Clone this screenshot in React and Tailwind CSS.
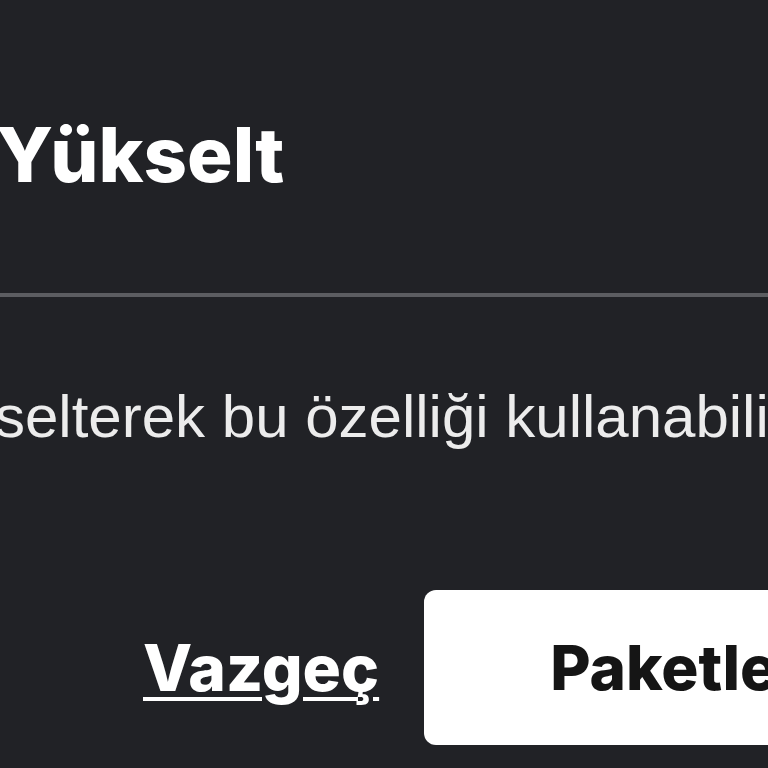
import React from 'react';

const App = () => {
  return (
    <div className="w-[768px] h-[768px] bg-[#212226] overflow-hidden flex flex-col">
      <h2
        className="pt-[116px] -ml-[4px] text-[76px] leading-none font-extrabold text-white whitespace-nowrap"
        style={{ fontFamily: 'Inter, "Noto Sans", sans-serif' }}
      >
        Yükselt
      </h2>

      <div className="mt-[101px] h-[4px] w-full bg-[#5c5d61]" />

      <p
        className="mt-[90px] -ml-[5px] text-[60px] leading-none text-[#ececec] whitespace-nowrap"
        style={{ fontFamily: '"Liberation Sans", Arial, sans-serif' }}
      >
        selterek bu özelliği kullanabilirsiniz.
      </p>

      <div
        className="mt-[143px] pl-[143px] flex items-center gap-[45px] whitespace-nowrap"
        style={{ fontFamily: 'Inter, "Noto Sans", sans-serif' }}
      >
        <a className="text-[64px] leading-none font-extrabold text-white underline decoration-[4px] underline-offset-[6px]">
          Vazgeç
        </a>
        <button className="h-[155px] pl-[126px] pr-[60px] bg-white rounded-[12px] text-[62px] leading-none font-extrabold text-[#151515]">
          Paketleri Gör
        </button>
      </div>
    </div>
  );
};

export default App;
